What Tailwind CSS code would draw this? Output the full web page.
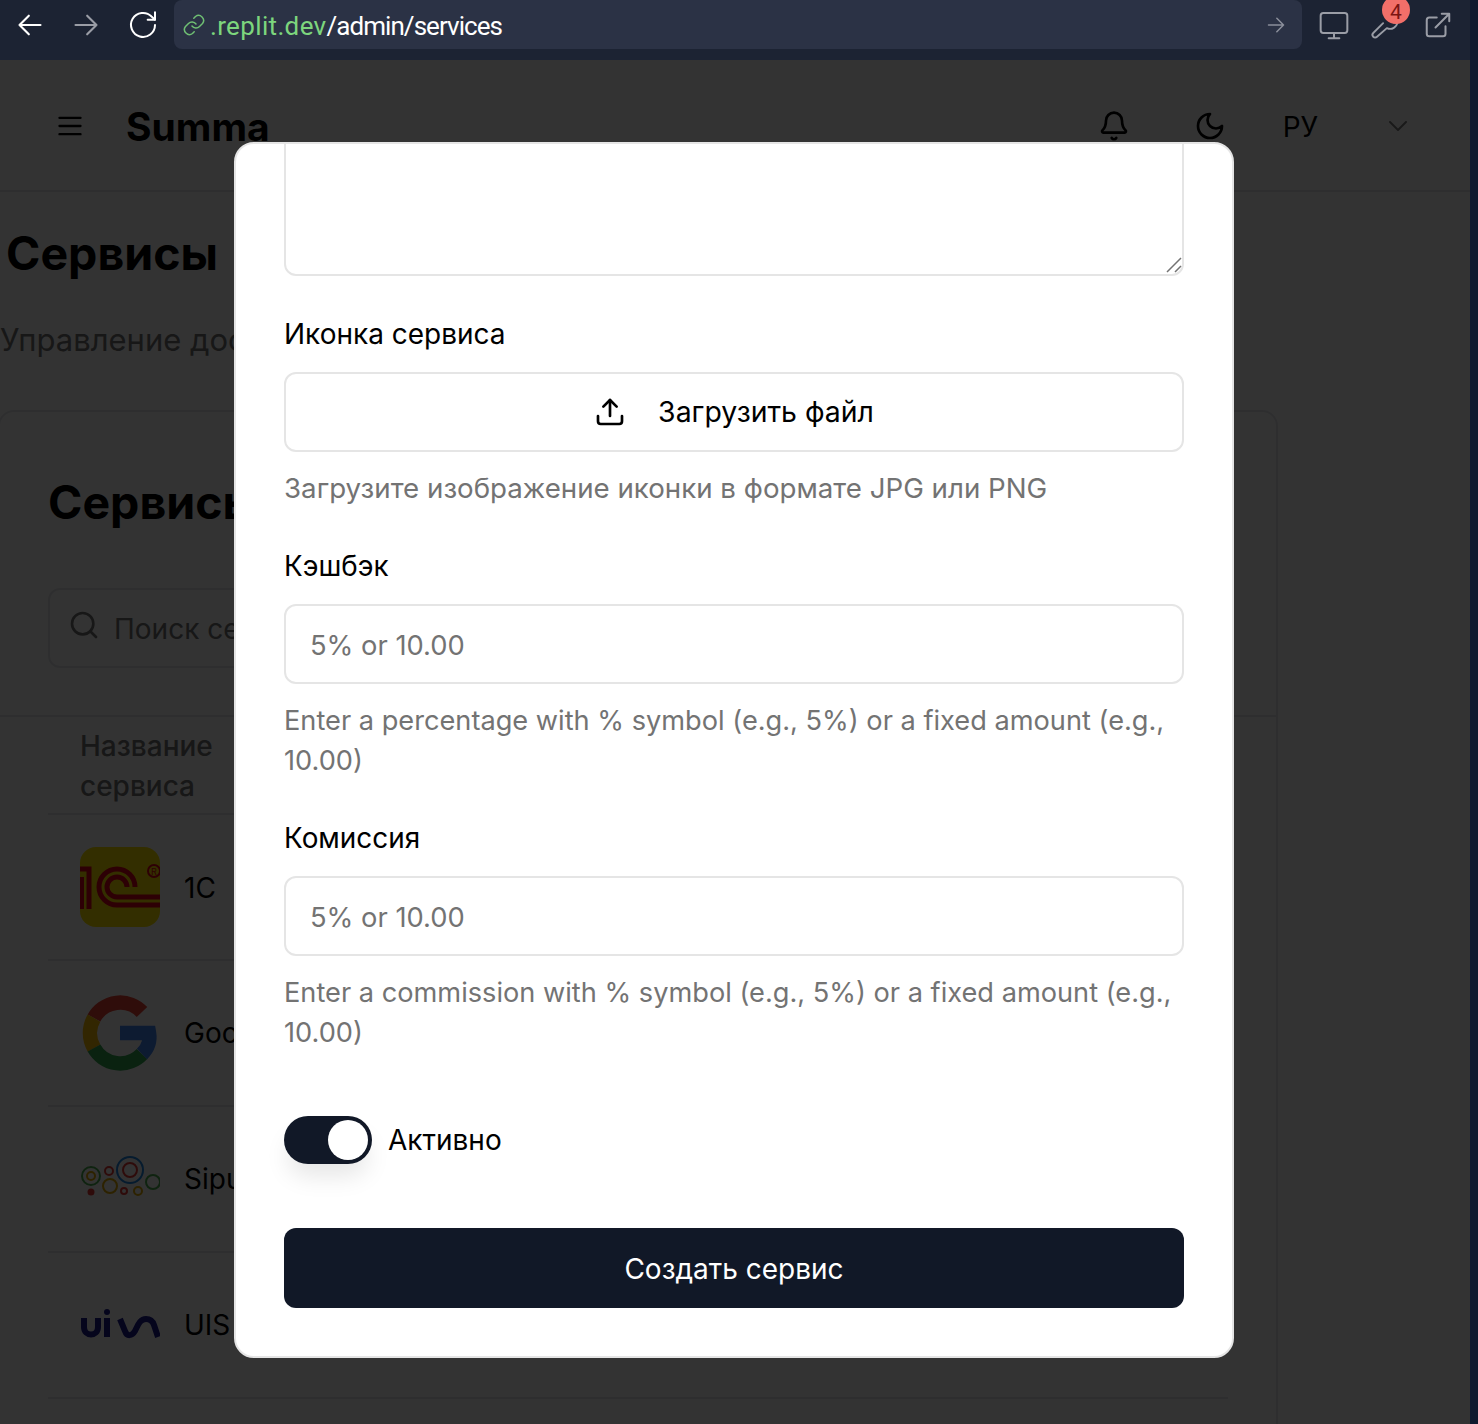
<!DOCTYPE html>
<html lang="ru">
<head>
  <meta charset="UTF-8" />
  <meta name="viewport" content="width=device-width, initial-scale=1.0"/>
  <title>Сервисы</title>
  <script src="https://cdn.jsdelivr.net/npm/@tailwindcss/browser@4"></script>
</head>
<body class="bg-[#0f1a2e] font-['Inter',sans-serif] text-black overflow-hidden">
  <div class="relative w-[1478px] h-[1424px] overflow-hidden">

    <!-- Browser bar -->
    <div class="w-[1470px] h-[60px] bg-[#1c2333] flex items-start">
      <div class="w-[174px] h-[50px] flex items-center shrink-0">
        <svg class="ml-[16px] w-[28px] h-[28px] text-white" viewBox="0 0 24 24" fill="none" stroke="currentColor" stroke-width="1.8" stroke-linecap="round" stroke-linejoin="round"><path d="M21 12H3M11 4l-8 8 8 8"/></svg>
        <svg class="ml-[28px] w-[28px] h-[28px] text-[#9a9da6]" viewBox="0 0 24 24" fill="none" stroke="currentColor" stroke-width="1.8" stroke-linecap="round" stroke-linejoin="round"><path d="M3 12h18M13 4l8 8-8 8"/></svg>
        <svg class="ml-[27px] w-[32px] h-[32px] text-white" viewBox="0 0 24 24" fill="none" stroke="currentColor" stroke-width="1.5" stroke-linecap="round" stroke-linejoin="round"><path d="M21 12a9 9 0 1 1-2.6-6.4L21 8"/><path d="M21 2.500V8h-5.500"/></svg>
      </div>
      <div class="w-[1128px] h-[49px] bg-[#2b3245] rounded-[8px] flex items-center shrink-0">
        <svg class="ml-[8px] w-[24px] h-[24px] text-[#6fbf73]" viewBox="0 0 24 24" fill="none" stroke="currentColor" stroke-width="1.5" stroke-linecap="round" stroke-linejoin="round"><path d="M10 13a5 5 0 0 0 7.500.5l3-3a5 5 0 0 0-7-7l-1.700 1.700"/><path d="M14 11a5 5 0 0 0-7.500-.5l-3 3a5 5 0 0 0 7 7l1.700-1.700"/></svg>
        <span class="ml-[4px] pt-[3px] text-[26px] leading-[46px] font-['Roboto',sans-serif] text-[#7dd67d] tracking-[0.35px]">.replit.dev<span class="text-white tracking-[-0.95px]">/admin/services</span></span>
        <svg class="ml-auto mr-[16px] w-[20px] h-[20px] text-[#8b8f9b]" viewBox="0 0 24 24" fill="none" stroke="currentColor" stroke-width="1.8" stroke-linecap="round" stroke-linejoin="round"><path d="M3 12h18M13 4l8 8-8 8"/></svg>
      </div>
      <div class="flex-1 h-[50px] relative">
        <svg class="absolute left-[16px] top-[9px] w-[32px] h-[32px] text-[#9a9da6]" viewBox="0 0 24 24" fill="none" stroke="currentColor" stroke-width="1.5" stroke-linecap="round" stroke-linejoin="round"><rect x="2" y="3" width="20" height="15" rx="2"/><path d="M12 18v4M8 22h8"/></svg>
        <svg class="absolute left-[68px] top-[10px] w-[30px] h-[30px] text-[#9a9da6]" viewBox="0 0 24 24" fill="none" stroke="currentColor" stroke-width="1.5" stroke-linecap="round" stroke-linejoin="round"><path d="M14.700 6.300a6 6 0 0 1 7-3.400L18 7l1 3 3-.4a6 6 0 0 1-8.500 4.900L5.600 21.400a2 2 0 0 1-3-3l7.900-7.900"/></svg>
        <span class="absolute left-[80px] top-[-4px] w-[28px] h-[28px] rounded-full bg-[#f26f69]"></span>
        <span class="absolute left-[80px] top-0 w-[28px] h-[25px] text-[#7c1512] text-[21px] leading-[25px] text-center font-['Roboto',sans-serif]">4</span>
        <svg class="absolute left-[121px] top-[10px] w-[30px] h-[30px] text-[#9a9da6]" viewBox="0 0 24 24" fill="none" stroke="currentColor" stroke-width="1.600" stroke-linecap="round" stroke-linejoin="round"><path d="M18 13v6a2 2 0 0 1-2 2H5a2 2 0 0 1-2-2V8a2 2 0 0 1 2-2h6"/><path d="M15 3h6v6M10 14L21 3"/></svg>
      </div>
    </div>

    <!-- Page behind the dialog -->
    <div class="w-[1470px] h-[1364px] bg-white overflow-hidden">
      <header class="h-[132px] border-b-2 border-[#e5e7eb] flex items-center pl-[56px] pt-[2px]">
        <svg class="w-[28px] h-[28px]" viewBox="0 0 24 24" fill="none" stroke="currentColor" stroke-width="2" stroke-linecap="round"><path d="M3 5h18M3 12h18M3 19h18"/></svg>
        <span class="ml-[42px] mt-[2px] text-[39px] font-bold leading-[48px]">Summa</span>
        <svg class="ml-[828px] w-[32px] h-[32px]" viewBox="0 0 24 24" fill="none" stroke="currentColor" stroke-width="2" stroke-linecap="round" stroke-linejoin="round"><path d="M10.300 21a2 2 0 0 0 3.400 0"/><path d="M3.300 15.300A1 1 0 0 0 4 17h16a1 1 0 0 0 .7-1.700C19.400 14 18 12.500 18 8A6 6 0 0 0 6 8c0 4.500-1.400 6-2.700 7.300"/></svg>
        <svg class="ml-[64px] w-[32px] h-[32px]" viewBox="0 0 24 24" fill="none" stroke="currentColor" stroke-width="2" stroke-linecap="round" stroke-linejoin="round"><path d="M12 3a6 6 0 0 0 9 9 9 9 0 1 1-9-9Z"/></svg>
        <span class="ml-[57px] mt-[2px] text-[28px] leading-[40px]">РУ</span>
        <svg class="ml-[68px] w-[24px] h-[24px] opacity-50" viewBox="0 0 24 24" fill="none" stroke="currentColor" stroke-width="2" stroke-linecap="round" stroke-linejoin="round"><path d="m4 8 8 8 8-8"/></svg>
      </header>

      <main>
        <h1 class="ml-[6px] mt-[31px] text-[46.5px] leading-[60px] font-bold">Сервисы</h1>
        <p class="mt-[33px] text-[31px] leading-[48px] text-[#737373] whitespace-nowrap">Управление доступными сервисами</p>

        <section class="mt-[46px] w-[1280px] h-[1100px] border-2 border-[#e5e7eb] rounded-[16px] -ml-[2px]">
          <div class="px-[48px] pt-[60px]">
            <h2 class="text-[46.5px] leading-[60px] font-bold">Сервисы</h2>
            <div class="mt-[56px] w-[500px] h-[80px] border-2 border-[#e5e7eb] rounded-[12px] flex items-center pl-[18px]">
              <svg class="w-[32px] h-[32px] text-[#737373] -mt-[6px]" viewBox="0 0 24 24" fill="none" stroke="currentColor" stroke-width="2" stroke-linecap="round" stroke-linejoin="round"><circle cx="11" cy="11" r="8"/><path d="m21 21-4.300-4.300"/></svg>
              <span class="ml-[14px] pt-[2px] text-[28px] text-[#737373]">Поиск сервисов</span>
            </div>
          </div>
          <div class="mt-[47px] border-t-2 border-[#e5e7eb] px-[48px]">
            <div class="h-[98px] border-b-2 border-[#e5e7eb] pl-[32px] pt-[9px] text-[28px] leading-[40px] font-medium text-[#737373]">Название<br>сервиса</div>

            <div class="h-[146px] border-b-2 border-[#e5e7eb] flex items-center pl-[32px]">
              <svg class="w-[80px] h-[80px] rounded-[16px] shrink-0" viewBox="0 0 80 80" fill="none">
                <rect width="80" height="80" fill="#ffe600"/>
                <g stroke="#e2001a" stroke-width="5">
                  <path d="M0 22H9V62M1.500 30V62"/>
                  <path d="M55 40A18 18 0 1 0 37 58H80"/>
                  <path d="M47 40A10 10 0 1 0 37 50H80"/>
                </g>
                <circle cx="74" cy="24" r="6" stroke="#e2001a" stroke-width="2"/>
                <text x="74" y="27.500" text-anchor="middle" font-size="9" fill="#e2001a">R</text>
              </svg>
              <span class="ml-[24px] pt-px text-[28px]">1C</span>
            </div>

            <div class="h-[146px] border-b-2 border-[#e5e7eb] flex items-center pl-[32px]">
              <svg class="w-[80px] h-[80px] shrink-0" viewBox="0 0 80 80" fill="none" stroke-width="14.500">
                <path d="M62 19A30 30 0 0 0 14 25" stroke="#ea4335"/>
                <path d="M14 25A30 30 0 0 0 14 55" stroke="#fbbc05"/>
                <path d="M14 55A30 30 0 0 0 62 61" stroke="#34a853"/>
                <path d="M62 61C70 53 70 46 69 40H40" stroke="#4285f4"/>
              </svg>
              <span class="ml-[24px] text-[28px]">Google</span>
            </div>

            <div class="h-[146px] border-b-2 border-[#e5e7eb] flex items-center pl-[32px]">
              <svg class="w-[80px] h-[80px] shrink-0" viewBox="0 0 80 80" fill="none" stroke-width="2">
                <g transform="translate(0 -2)">
                  <circle cx="11" cy="39" r="9" stroke="#4caf50"/>
                  <circle cx="11" cy="39" r="4" stroke="#e0a800"/>
                  <circle cx="29" cy="34" r="4" stroke="#e53935"/>
                  <circle cx="50" cy="33" r="13" stroke="#1e88e5"/>
                  <circle cx="50" cy="33" r="7" stroke="#e53935"/>
                  <circle cx="73" cy="45" r="7" stroke="#4caf50"/>
                  <circle cx="30" cy="49" r="7" stroke="#e0a800"/>
                  <circle cx="44" cy="54" r="3" stroke="#e53935"/>
                  <circle cx="58" cy="54" r="4" stroke="#e0a800"/>
                  <circle cx="11" cy="55" r="3.500" fill="#e53935" stroke="none"/>
                </g>
              </svg>
              <span class="ml-[24px] text-[28px]">Sipuni</span>
            </div>

            <div class="h-[146px] border-b-2 border-[#e5e7eb] flex items-center pl-[32px]">
              <svg class="w-[80px] h-[80px] shrink-0" viewBox="0 0 80 80" fill="none" stroke="#1a1a8c" stroke-width="6">
                <path d="M4 33V42C4 52 18 52 18 42V33"/>
                <path d="M27 33V52"/>
                <circle cx="27" cy="27" r="3" fill="#1a1a8c" stroke="none"/>
                <path d="M40 34L45 46C47 52 52 51 55 46C58 40 60 34 66 34C71 34 73 37 74 40L78 52"/>
              </svg>
              <span class="ml-[24px] text-[28px]">UIS</span>
            </div>
          </div>
        </section>
      </main>
    </div>

    <!-- Overlay -->
    <div class="absolute left-0 top-[60px] w-[1470px] bottom-0 bg-black/80"></div>

    <!-- Dialog -->
    <div class="absolute left-[234px] top-[142px] w-[1000px] h-[1216px] bg-white border-2 border-[#e5e5e5] rounded-[20px] overflow-hidden flex flex-col justify-end px-[48px] pb-[48px]">
      <div class="relative shrink-0">
        <textarea class="block w-full h-[240px] border-2 border-[#e5e5e5] rounded-[12px] resize-none outline-none"></textarea>
        <svg class="absolute right-[2px] bottom-[3px] w-[16px] h-[16px] text-[#737373]" viewBox="0 0 16 16" fill="none" stroke="currentColor" stroke-width="1.500"><path d="M1 15L15 1M9 15L15 9"/></svg>
      </div>

      <label class="block shrink-0 mt-[37px] pt-px text-[28px] leading-[40px]">Иконка сервиса</label>
      <div class="mt-[18px] h-[80px] shrink-0 border-2 border-[#e5e5e5] rounded-[12px] flex items-center justify-center">
        <svg class="w-[32px] h-[32px]" viewBox="0 0 24 24" fill="none" stroke="currentColor" stroke-width="2" stroke-linecap="round" stroke-linejoin="round"><path d="M21 15v4a2 2 0 0 1-2 2H5a2 2 0 0 1-2-2v-4"/><path d="M17 8l-5-5-5 5"/><path d="M12 3v12"/></svg>
        <span class="ml-[32px] text-[28.4px] leading-[40px]">Загрузить файл</span>
      </div>
      <p class="shrink-0 mt-[15px] pt-px text-[27.7px] leading-[40px] text-[#737373]">Загрузите изображение иконки в формате JPG или PNG</p>

      <label class="block shrink-0 mt-[37px] pt-px text-[27.8px] leading-[40px]">Кэшбэк</label>
      <input class="block shrink-0 mt-[18px] w-full h-[80px] border-2 border-[#e5e5e5] rounded-[12px] px-[24px] pt-[2px] text-[27.3px] placeholder:text-[#737373] outline-none" placeholder="5% or 10.00" />
      <p class="shrink-0 mt-[15px] pt-[2px] text-[27.2px] leading-[40px] text-[#737373]">Enter a percentage with % symbol (e.g., 5%) or a fixed amount (e.g., 10.00)</p>

      <label class="block shrink-0 mt-[36px] pt-px text-[27.9px] leading-[40px]">Комиссия</label>
      <input class="block shrink-0 mt-[18px] w-full h-[80px] border-2 border-[#e5e5e5] rounded-[12px] px-[24px] pt-[2px] text-[27.3px] placeholder:text-[#737373] outline-none" placeholder="5% or 10.00" />
      <p class="shrink-0 mt-[15px] pt-[2px] text-[27.2px] leading-[40px] text-[#737373]">Enter a commission with % symbol (e.g., 5%) or a fixed amount (e.g., 10.00)</p>

      <div class="mt-[63px] flex items-center shrink-0">
        <div class="w-[88px] h-[48px] rounded-full bg-[#111827] flex items-center justify-end pr-[4px] shadow-[0_16px_24px_-4px_rgba(0,0,0,0.1)]">
          <div class="w-[40px] h-[40px] rounded-full bg-white"></div>
        </div>
        <span class="ml-[16px] text-[28px] leading-[48px]">Активно</span>
      </div>

      <button class="mt-[64px] h-[80px] shrink-0 rounded-[12px] bg-[#111827] pt-[2px] text-white text-[28px]">Создать сервис</button>
    </div>
  </div>
</body>
</html>
